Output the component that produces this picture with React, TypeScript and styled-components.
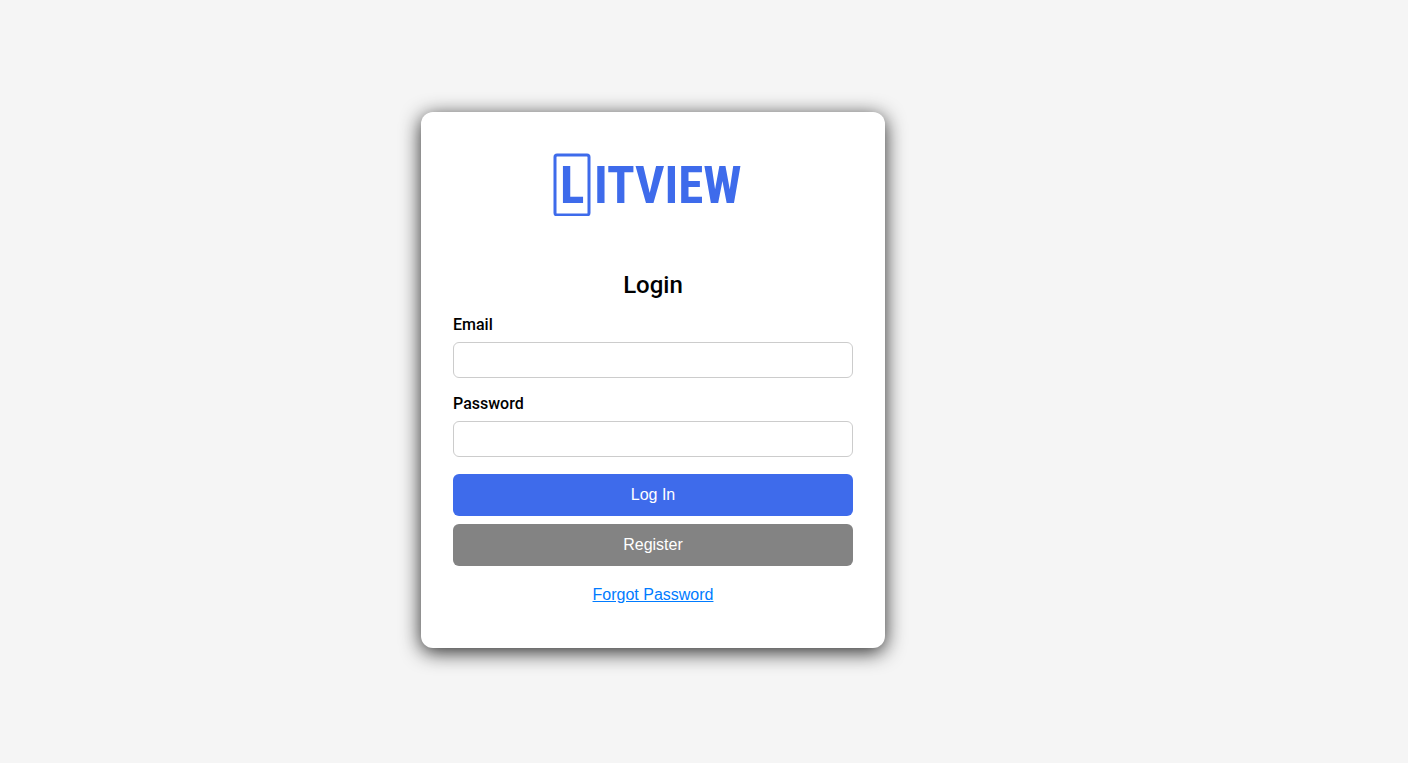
import React from "react";
import styled, { createGlobalStyle } from "styled-components";

const GlobalStyle = createGlobalStyle`
  *, *::before, *::after {
    box-sizing: border-box;
  }
  body {
    margin: 0;
    background: #f5f5f5;
    color: #000;
    font-family: Roboto, "Liberation Sans", sans-serif;
  }
`;

const Page = styled.main`
  min-height: 100vh;
  display: flex;
  align-items: center;
  justify-content: center;
  padding: 16px 102px 19px 0;
`;

const Card = styled.section`
  width: 100%;
  max-width: 464px;
  padding: 40px 32px;
  background: #fff;
  border-radius: 12px;
  box-shadow: 0 4px 20px rgba(0, 0, 0, 0.85);
`;

const Logo = styled.svg`
  display: block;
  width: 200px;
  height: 64px;
  margin: 0 auto;
`;

const LogoText = styled.text`
  font-family: "Roboto Condensed", Roboto, sans-serif;
  font-size: 51px;
  font-weight: 700;
  fill: #3e6beb;
`;

const Title = styled.h1`
  margin: 55px 0 16px;
  font-size: 24px;
  line-height: 28px;
  font-weight: 500;
  text-align: center;
`;

const Field = styled.div`
  display: flex;
  flex-direction: column;
  gap: 8px;
  margin-bottom: 16px;
`;

const Label = styled.label`
  font-size: 16px;
  line-height: 19px;
  font-weight: 500;
`;

const Input = styled.input`
  width: 100%;
  height: 36px;
  padding: 8px;
  border: 1px solid #ccc;
  border-radius: 6px;
  background: #fff;
  font: 16px "Liberation Sans", Arial, sans-serif;
`;

const Actions = styled.div`
  display: flex;
  flex-direction: column;
  gap: 8px;
  padding-top: 1px;
`;

const Button = styled.button<{ $tone: "primary" | "neutral" }>`
  height: 42px;
  border: 0;
  border-radius: 6px;
  background: ${({ $tone }) => ($tone === "primary" ? "#3e6beb" : "#838383")};
  color: #fff;
  font: 16px "Liberation Sans", Arial, sans-serif;
  cursor: pointer;
`;

const Footer = styled.p`
  margin: 19px 0 4px;
  text-align: center;
  font: 16px/19px "Liberation Sans", Arial, sans-serif;
`;

const Link = styled.a`
  color: #007bff;
  text-decoration: underline;
`;

export default function App() {
  return (
    <>
      <GlobalStyle />
      <Page>
        <Card>
          <Logo viewBox="0 0 200 64" role="img" aria-label="Litview">
            <rect x="2" y="3" width="34" height="60" rx="2" fill="none" stroke="#3e6beb" strokeWidth="3" />
            <LogoText x="7" y="51">L</LogoText>
            <LogoText x="41" y="51">ITVIEW</LogoText>
          </Logo>
          <Title>Login</Title>
          <form onSubmit={(event) => event.preventDefault()}>
            <Field>
              <Label htmlFor="email">Email</Label>
              <Input id="email" type="email" />
            </Field>
            <Field>
              <Label htmlFor="password">Password</Label>
              <Input id="password" type="password" />
            </Field>
            <Actions>
              <Button type="submit" $tone="primary">Log In</Button>
              <Button type="button" $tone="neutral">Register</Button>
            </Actions>
          </form>
          <Footer>
            <Link href="#forgot-password">Forgot Password</Link>
          </Footer>
        </Card>
      </Page>
    </>
  );
}
